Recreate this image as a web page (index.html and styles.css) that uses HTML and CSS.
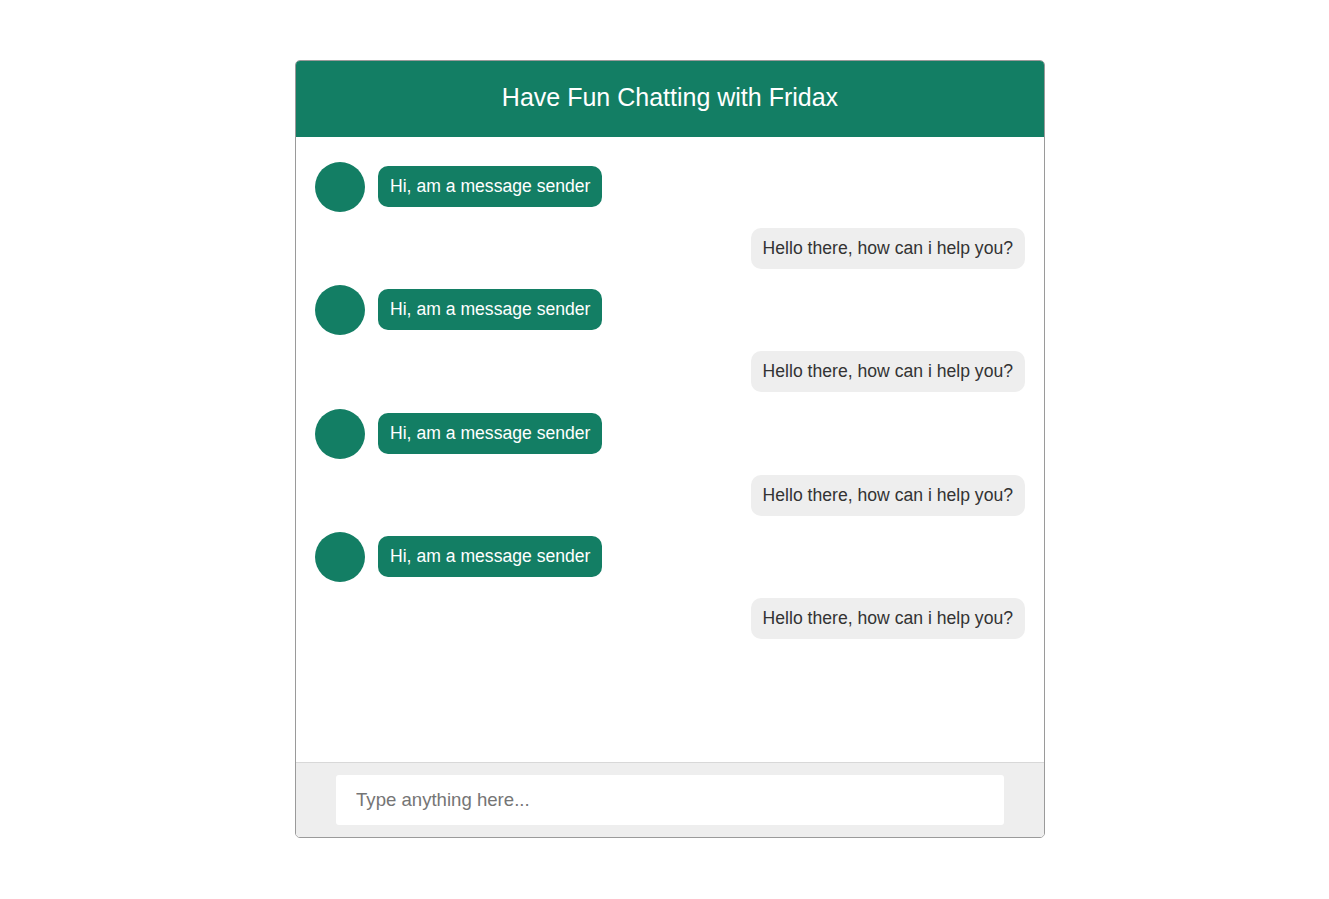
FILE: index.html
```html
<!DOCTYPE html>
<html lang="en">
<head>
<meta charset="utf-8">
<title>Fridax Chat</title>
<link rel="stylesheet" href="styles.css">
</head>
<body>
<div class="chat">
  <header class="chat-header">Have Fun Chatting with Fridax</header>
  <main class="chat-body">
    <div class="row sent"><div class="avatar"></div><div class="bubble bubble-sent">Hi, am a message sender</div></div>
    <div class="row received"><div class="bubble bubble-received">Hello there, how can i help you?</div></div>
    <div class="row sent"><div class="avatar"></div><div class="bubble bubble-sent">Hi, am a message sender</div></div>
    <div class="row received"><div class="bubble bubble-received">Hello there, how can i help you?</div></div>
    <div class="row sent"><div class="avatar"></div><div class="bubble bubble-sent">Hi, am a message sender</div></div>
    <div class="row received"><div class="bubble bubble-received">Hello there, how can i help you?</div></div>
    <div class="row sent"><div class="avatar"></div><div class="bubble bubble-sent">Hi, am a message sender</div></div>
    <div class="row received"><div class="bubble bubble-received">Hello there, how can i help you?</div></div>
  </main>
  <footer class="chat-footer">
    <input class="chat-input" type="text" placeholder="Type anything here...">
  </footer>
</div>
</body>
</html>
```
FILE: styles.css
```css
* { box-sizing: border-box; }
html, body { margin: 0; padding: 0; background: #fff; }
body { font-family: "Liberation Sans", Arial, sans-serif; color: #333; padding-left: 11px; }

.chat {
  width: 750px;
  height: 778px;
  margin: 60px auto 0;
  border: 1px solid #9a9a9a;
  border-radius: 5px;
  overflow: hidden;
  display: flex;
  flex-direction: column;
}

.chat-header {
  height: 76px;
  flex: 0 0 76px;
  background: #137e64;
  color: #fff;
  font-size: 25px;
  display: flex;
  align-items: center;
  justify-content: center;
  padding-bottom: 4px;
}

.chat-body {
  flex: 1;
  padding: 25px 19px 0 19px;
  display: flex;
  flex-direction: column;
  gap: 16.17px;
  background: #fff;
}

.row { display: flex; align-items: center; }
.row.sent { gap: 13px; }
.row.sent .bubble { margin-bottom: 1px; }
.row.received { justify-content: flex-end; }

.avatar {
  width: 50px;
  height: 50px;
  border-radius: 50%;
  background: #137e64;
  flex: 0 0 50px;
}

.bubble {
  font-size: 17.6px;
  line-height: 21px;
  padding: 10px 12px;
  border-radius: 10px;
}
.bubble-sent { background: #137e64; color: #fff; }
.bubble-received { background: #eeeeee; color: #333; }

.chat-footer {
  flex: 0 0 75px;
  border-top: 1px solid #d8d8d8;
  background: #eeeeee;
  padding: 12px 40px;
}

.chat-input {
  display: block;
  width: 100%;
  height: 50px;
  border: none;
  border-radius: 3px;
  background: #fff;
  padding: 0 20px;
  font-family: "Liberation Sans", Arial, sans-serif;
  font-size: 18.6px;
  color: #333;
  outline: none;
}
.chat-input::placeholder { color: #757575; }
```
